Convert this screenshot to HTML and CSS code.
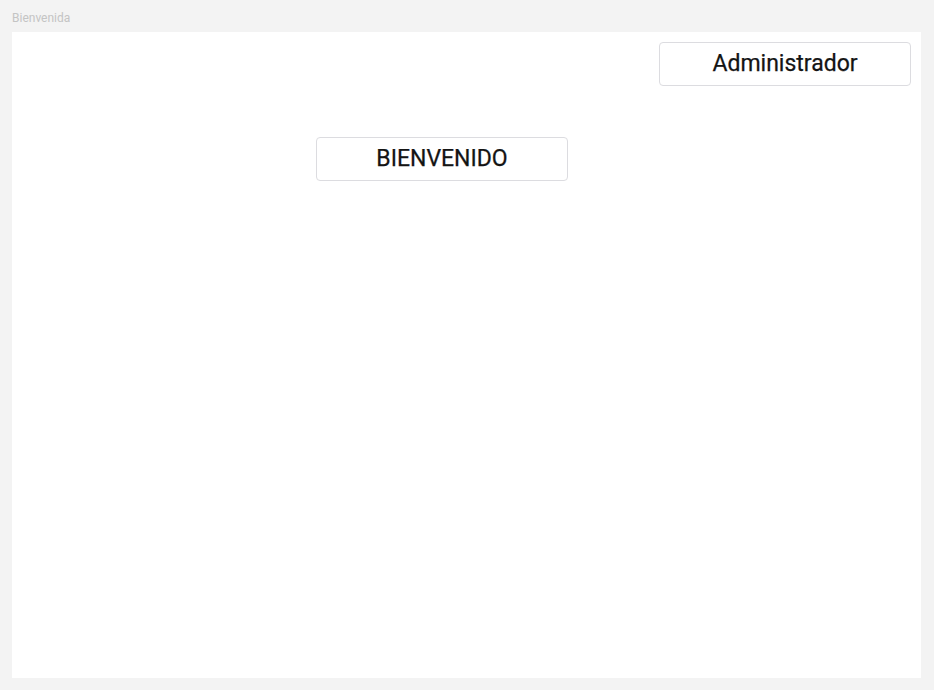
FILE: index.html
```html
<!DOCTYPE html>
<html lang="es">
<head>
<meta charset="utf-8">
<title>Bienvenida</title>
<link rel="stylesheet" href="styles.css">
</head>
<body>
<div class="page-label">Bienvenida</div>
<main class="panel">
  <div class="top-row">
    <button class="btn">Administrador</button>
  </div>
  <div class="welcome-row">
    <button class="btn">BIENVENIDO</button>
  </div>
</main>
</body>
</html>
```
FILE: styles.css
```css
html, body {
  margin: 0;
  padding: 0;
  height: 100%;
}
body {
  background: #f3f3f3;
  font-family: Roboto, "Liberation Sans", sans-serif;
  padding: 0 13px 12px 12px;
  box-sizing: border-box;
  display: flex;
  flex-direction: column;
}
.page-label {
  font-size: 12px;
  line-height: 12px;
  color: #c4c4c4;
  padding-top: 12px;
  height: 24px;
  box-sizing: border-box;
}
.panel {
  flex: 1;
  background: #ffffff;
  margin-top: 8px;
  padding: 10px 10px 0 10px;
  box-sizing: border-box;
}
.top-row {
  display: flex;
  justify-content: flex-end;
}
.welcome-row {
  padding-left: 294px;
  margin-top: 51px;
}
.btn {
  width: 252px;
  height: 44px;
  background: #ffffff;
  border: 1px solid #dcdce0;
  border-radius: 4px;
  font-family: Roboto, "Liberation Sans", sans-serif;
  font-size: 23px;
  font-weight: 400;
  color: #141414;
  padding: 0 0 2px 0;
  display: block;
  -webkit-text-stroke: 0.25px #141414;
}
```
